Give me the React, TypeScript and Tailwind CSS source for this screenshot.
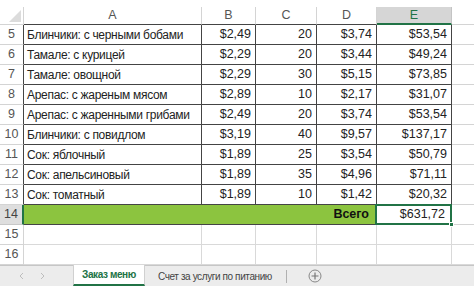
import React from "react";

const W = [24, 178, 54, 61, 60, 75];
const rows = [
  ["5", "Блинчики: с черными бобами", "$2,49", "20", "$3,74", "$53,54"],
  ["6", "Тамале: с курицей", "$2,29", "20", "$3,44", "$49,24"],
  ["7", "Тамале: овощной", "$2,29", "30", "$5,15", "$73,85"],
  ["8", "Арепас: с жареным мясом", "$2,89", "10", "$2,17", "$31,07"],
  ["9", "Арепас: с жаренными грибами", "$2,49", "20", "$3,74", "$53,54"],
  ["10", "Блинчики: с повидлом", "$3,19", "40", "$9,57", "$137,17"],
  ["11", "Сок: яблочный", "$1,89", "25", "$3,54", "$50,79"],
  ["12", "Сок: апельсиновый", "$1,89", "35", "$4,96", "$71,11"],
  ["13", "Сок: томатный", "$1,89", "10", "$1,42", "$20,32"],
];

const font = { fontFamily: '"Liberation Sans", Arial, sans-serif' };

export default function App() {
  return (
    <div className="w-[474px] h-[286px] bg-white overflow-hidden relative text-[12.5px] text-[#222]" style={font}>
      <div className="h-[7px] bg-white" />
      {/* header row */}
      <div className="flex h-[18px]">
        <div className="w-[24px] shrink-0 border-r border-b border-[#d4d4d4] relative">
          <svg className="absolute left-[9px] top-[3px]" width="12" height="12" viewBox="0 0 12 12">
            <polygon points="12,0 12,12 0,12" fill="#dcdcdc" />
          </svg>
        </div>
        {["A", "B", "C", "D"].map((l, i) => (
          <div
            key={l}
            className="shrink-0 flex items-center justify-center border-r border-r-[#d4d4d4] border-b border-b-[#444] text-[#555] text-[12.5px]"
            style={{ width: W[i + 1] }}
          >
            {l}
          </div>
        ))}
        <div className="w-[75px] shrink-0 flex items-center justify-center bg-[#d6d6d6] border-r border-r-[#c4c4c4] border-b-2 border-b-[#217346] text-[#217346]">
          E
        </div>
        <div className="flex-1 border-b border-[#d4d4d4]" />
      </div>
      {rows.map((r) => (
        <div key={r[0]} className="flex h-[20px]">
          <div className="w-[24px] shrink-0 flex items-center justify-center border-r border-r-[#444] border-b border-b-[#d4d4d4] text-[#555]">
            {r[0]}
          </div>
          <div className="w-[178px] shrink-0 flex items-center pl-[3px] border-r border-b border-[#444] whitespace-nowrap text-[12px] tracking-[-0.3px]">
            {r[1]}
          </div>
          <div className="w-[54px] shrink-0 flex items-center justify-end pr-[4px] border-r border-b border-[#444]">{r[2]}</div>
          <div className="w-[61px] shrink-0 flex items-center justify-end pr-[4px] border-r border-b border-[#444]">{r[3]}</div>
          <div className="w-[60px] shrink-0 flex items-center justify-end pr-[4px] border-r border-b border-[#444]">{r[4]}</div>
          <div className="w-[75px] shrink-0 flex items-center justify-end pr-[4px] border-r border-b border-[#444]">{r[5]}</div>
          <div className="flex-1 border-b border-[#d4d4d4]" />
        </div>
      ))}
      {/* row 14 */}
      <div className="flex h-[20px]">
        <div className="w-[24px] shrink-0 flex items-center justify-center bg-[#dedede] border-r-2 border-r-[#217346] border-b border-b-[#c8c8c8] text-[#444]">
          14
        </div>
        <div className="w-[351px] shrink-0 flex items-center justify-end pr-[6px] bg-[#8cc43f] border-b border-[#444] font-bold text-[#111]">
          Всего
        </div>
        <div className="w-[77px] shrink-0 relative flex items-center justify-end pr-[5px] border-2 border-[#217346] -mt-[1px] h-[21px]">
          $631,72
          <div className="absolute -right-[4px] -bottom-[4px] w-[5px] h-[5px] bg-[#217346] border border-white" />
        </div>
        <div className="flex-1 border-b border-[#d4d4d4]" />
      </div>
      {["15", "16"].map((n) => (
        <div key={n} className="flex h-[20px]">
          <div className="w-[24px] shrink-0 flex items-center justify-center border-r border-b border-[#d4d4d4] text-[#555]">
            {n}
          </div>
          {W.slice(1).map((w, i) => (
            <div key={i} className="shrink-0 border-r border-b border-[#d9d9d9]" style={{ width: w }} />
          ))}
          <div className="flex-1 border-b border-[#d9d9d9]" />
        </div>
      ))}
      {/* tab bar */}
      <div className="flex h-[21px] bg-[#ececec] border-t border-[#c6c6c6] text-[10px] tracking-[-0.4px]">
        <div className="w-[73px] shrink-0 flex items-center">
          <svg className="ml-[19px]" width="5" height="8" viewBox="0 0 5 8">
            <path d="M4 1 1 4l3 3" fill="none" stroke="#bdbdbd" strokeWidth="1" />
          </svg>
          <svg className="ml-[16px]" width="5" height="8" viewBox="0 0 5 8">
            <path d="M1 1l3 3-3 3" fill="none" stroke="#bdbdbd" strokeWidth="1" />
          </svg>
        </div>
        <div className="w-[72px] shrink-0 bg-white flex items-center justify-center font-bold text-[#217346] border-b-2 border-[#217346] -mt-px border-x border-x-[#d0d0d0]">
          Заказ меню
        </div>
        <div className="flex items-center pl-[13px] text-[#444] whitespace-nowrap">Счет за услуги по питанию</div>
        <div className="ml-[14px] w-px h-[13px] bg-[#b0b0b0] self-center" />
        <div className="ml-[21px] flex items-center">
          <svg width="14" height="14" viewBox="0 0 14 14">
            <circle cx="7" cy="7" r="6" fill="none" stroke="#888" strokeWidth="1" />
            <path d="M7 3.5v7M3.5 7h7" stroke="#777" strokeWidth="1.2" />
          </svg>
        </div>
      </div>
    </div>
  );
}
